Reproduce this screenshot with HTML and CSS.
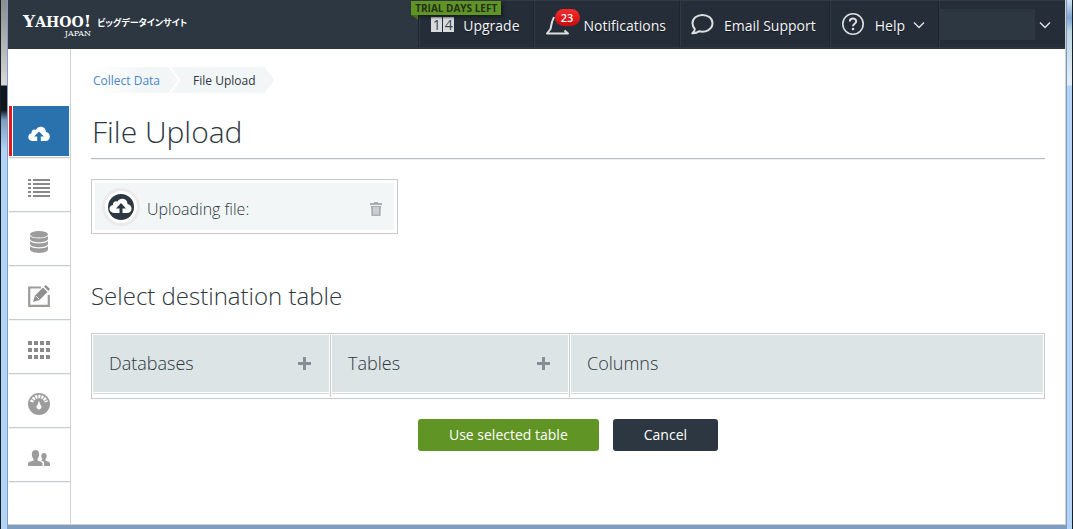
FILE: index.html
```html
<!DOCTYPE html>
<html lang="en">
<head>
  <meta charset="UTF-8" />
  <meta name="viewport" content="width=device-width, initial-scale=1.0"/>
  <title>File Upload</title>
  <link rel="stylesheet" href="styles.css">
</head>
<body>
  <div class="window">
    <header class="topbar">
      <a class="logo" href="#">
        <span class="logo-name"><span class="logo-yahoo"><b>Y</b>AHOO<b>!</b></span><span class="logo-japan">JAPAN</span></span>
        <span class="logo-product" lang="ja">ビッグデータインサイト</span>
      </a>
      <nav class="topnav">
        <a class="nav-item nav-upgrade" href="#">
          <span class="trial">TRIAL DAYS LEFT</span>
          <span class="days"><span>1</span><span>4</span></span>
          Upgrade
        </a>
        <a class="nav-item nav-notifications" href="#">
          <svg class="bell" width="24" height="22" viewBox="0 0 24 22">
            <path d="M8 3 L6 8 L4.500 15 L1 19.500 L22 19.500 L18.500 16.500" fill="none" stroke="#dcdfe0" stroke-width="2" stroke-linejoin="round"/>
          </svg>
          <span class="badge">23</span>
          Notifications
        </a>
        <a class="nav-item nav-email" href="#">
          <svg width="24" height="24" viewBox="0 0 24 24">
            <path d="M12.500 3 C6.800 3 2.500 6.500 2.500 11.300 C2.500 14 3.500 15.600 4.800 17 C4.900 18.800 3.800 20 2.300 21.300 C5.500 21.500 7.600 20.500 9 19.300 C16 21 22.500 17 22.500 11.300 C22.500 6.500 18.200 3 12.500 3 Z" fill="none" stroke="#dcdfe0" stroke-width="2" stroke-linejoin="round"/>
          </svg>
          Email Support
        </a>
        <a class="nav-item nav-help" href="#">
          <svg width="24" height="24" viewBox="0 0 24 24">
            <circle cx="12" cy="12" r="10.200" fill="none" stroke="#dcdfe0" stroke-width="1.600"/>
            <path d="M8.800 9.500 C8.800 5.600 15.200 5.600 15.200 9.300 C15.200 11.800 12 11.600 12 14.300" fill="none" stroke="#dcdfe0" stroke-width="2"/>
            <circle cx="12" cy="17" r="1.300" fill="#dcdfe0"/>
          </svg>
          Help
          <svg class="chevron" width="12" height="8" viewBox="0 0 12 8"><path d="M1 1.500 L6 6.500 L11 1.500" fill="none" stroke="#dcdfe0" stroke-width="1.500"/></svg>
        </a>
        <a class="nav-item nav-account" href="#" aria-label="Account">
          <span class="account-name"></span>
          <svg class="chevron" width="12" height="8" viewBox="0 0 12 8"><path d="M1 1.500 L6 6.500 L11 1.500" fill="none" stroke="#dcdfe0" stroke-width="1.500"/></svg>
        </a>
      </nav>
    </header>

    <div class="layout">
      <nav class="sidebar">
        <a class="side-item active" href="#" aria-label="Collect data">
          <svg width="22" height="16" viewBox="0 0 22 16">
            <path d="M5 15 C-1 15 -1 8 3.500 7.300 C3 4 6.500 2.500 8 4 C10 -1 18 0 17.800 6 C23.500 6.500 23 15 17.500 15 Z" fill="#fff"/>
            <path d="M11 5.500 L16 10.500 H12.800 V15 H9.200 V10.500 H6 Z" fill="#2a72ae"/>
          </svg>
        </a>
        <a class="side-item" href="#" aria-label="Jobs">
          <svg width="22" height="18" viewBox="0 0 22 18" fill="#8a8a8a">
            <path d="M0 0h3v2H0z M5 0h17v2H5z M0 4h3v2H0z M5 4h17v2H5z M0 8h3v2H0z M5 8h17v2H5z M0 12h3v2H0z M5 12h17v2H5z M0 16h3v2H0z M5 16h17v2H5z"/>
          </svg>
        </a>
        <a class="side-item" href="#" aria-label="Databases">
          <svg width="18" height="22" viewBox="0 0 18 22" fill="#9c9c9c">
            <ellipse cx="9" cy="3.300" rx="9" ry="3.300"/>
            <path d="M0 5 C2 8.200 16 8.200 18 5 V8 C17 12.300 1 12.300 0 8 Z"/>
            <path d="M0 10 C2 13.200 16 13.200 18 10 V13 C17 17.300 1 17.300 0 13 Z"/>
            <path d="M0 15 C2 18.200 16 18.200 18 15 V18.500 C17 23 1 23 0 18.500 Z"/>
          </svg>
        </a>
        <a class="side-item" href="#" aria-label="New query">
          <svg width="22" height="22" viewBox="0 0 22 22">
            <path d="M13 2.500 H1.200 V20.800 H20.800 V10" fill="none" stroke="#9c9c9c" stroke-width="2.200"/>
            <path d="M5 17 L7 10.500 L15 2.500 L19.500 7 L11.500 15 Z M16 1.500 L17.800 0 L22 4 L20.400 6 Z" fill="#8f8f8f"/>
            <path d="M8 11 L11 14" stroke="#fff" stroke-width="0.800"/>
          </svg>
        </a>
        <a class="side-item" href="#" aria-label="Applications">
          <svg width="22" height="18" viewBox="0 0 22 18" fill="#8a8a8a">
            <path d="M0 0h4v4H0z M6 0h4v4H6z M12 0h4v4h-4z M18 0h4v4h-4z M0 7h4v4H0z M6 7h4v4H6z M12 7h4v4h-4z M18 7h4v4h-4z M0 14h4v4H0z M6 14h4v4H6z M12 14h4v4h-4z M18 14h4v4h-4z"/>
          </svg>
        </a>
        <a class="side-item" href="#" aria-label="Usage">
          <svg width="22" height="22" viewBox="0 0 22 22">
            <circle cx="11" cy="11" r="11" fill="#9c9c9c"/>
            <path d="M3.700 9 A7.600 7.600 0 0 1 18.300 9" fill="none" stroke="#fff" stroke-width="3.500" stroke-dasharray="2 1"/>
            <path d="M11 7.500 L12.400 12 A2.400 2.400 0 1 1 9.600 12 Z" fill="#fff"/>
          </svg>
        </a>
        <a class="side-item" href="#" aria-label="Users">
          <svg width="22" height="16" viewBox="0 0 22 16" fill="#9c9c9c">
            <path d="M0 16 V13 C1 11.500 4 11.500 5.500 10.500 V9 C3 6 3 0 7.500 0 C12 0 12 6 9.500 9 V10.500 C11 11.500 13.500 11.500 14.500 13 V16 Z"/>
            <path d="M16 16 V12.500 C15.500 11.500 14.500 11 13.200 10.500 C14 10 14.500 9.500 14.500 9 C12.500 6.500 13 3 16 3 C19 3 19.500 6.500 17.500 9 V10.500 C18.500 11.500 21 11.500 22 13 V16 Z"/>
          </svg>
        </a>
      </nav>

      <main class="content">
        <nav class="breadcrumb" aria-label="Breadcrumb">
          <a class="crumb crumb-first" href="#">Collect Data</a>
          <span class="crumb crumb-last">File Upload</span>
        </nav>

        <h1>File Upload</h1>

        <section class="upload">
          <div class="upload-inner">
            <svg class="upload-icon" width="38" height="38" viewBox="0 0 38 38">
              <circle cx="19" cy="19" r="17.500" fill="#fff" stroke="#ebebeb" stroke-width="3"/>
              <circle cx="19" cy="19" r="13" fill="#2d3741"/>
              <path d="M13 25 C6 25 6 17.500 11 17 C10.500 14 13.500 12.500 15.500 13.500 C18 9 25.500 10.500 25.500 16 C31 17 31 25 25 25 Z" fill="#fff"/>
              <path d="M19 15 L24 20.500 H20.500 V25 H17.500 V20.500 H14 Z" fill="#2d3741"/>
            </svg>
            <span class="upload-label">Uploading file:</span>
            <button class="icon-button" type="button" aria-label="Remove file">
              <svg width="12" height="14" viewBox="0 0 12 14">
                <path d="M4 1 V0 H8 V1 H12 V3 H0 V1 Z M1 4 H11 L10.500 14 H1.500 Z" fill="#a9aeb2"/>
                <path d="M4 5 V12.500 M6 5 V12.500 M8 5 V12.500" stroke="#f2f6f7" stroke-width="0.900"/>
              </svg>
            </button>
          </div>
        </section>

        <h2>Select destination table</h2>

        <section class="picker">
          <div class="picker-col">
            <h3>Databases</h3>
            <button class="icon-button" type="button" aria-label="Add database">
              <svg width="13" height="13" viewBox="0 0 13 13"><path d="M5 0h3v5h5v3H8v5H5V8H0V5h5z" fill="#868e96"/></svg>
            </button>
          </div>
          <div class="picker-col">
            <h3>Tables</h3>
            <button class="icon-button" type="button" aria-label="Add table">
              <svg width="13" height="13" viewBox="0 0 13 13"><path d="M5 0h3v5h5v3H8v5H5V8H0V5h5z" fill="#868e96"/></svg>
            </button>
          </div>
          <div class="picker-col">
            <h3>Columns</h3>
          </div>
        </section>

        <div class="actions">
          <button class="button button-primary" type="button">Use selected table</button>
          <button class="button button-dark" type="button">Cancel</button>
        </div>
      </main>
    </div>
  </div>
</body>
</html>
```
FILE: styles.css
```css
* {
  box-sizing: border-box;
}

body {
  margin: 0;
  padding: 0 6px 4px 7px;
  min-height: 100vh;
  display: flex;
  flex-direction: column;
  font-family: "Open Sans", "Noto Sans", sans-serif;
  font-size: 14px;
  color: #2d3741;
  background: linear-gradient(#8c8c8c, #d8d8d8 85px, #10141c 86px, #10141c 110px, #7f9cbd 120px, #b3d3f7 150px) left / 7px 100% no-repeat,
    linear-gradient(#cfe2f5, #7fa5cc 18px, #bdd8e0 32px, #e5eef8 85px, #b3d3f7 86px) right / 6px 100% no-repeat,
    #7e9cbd;
  border-right: 1px solid #16202b;
  border-left: 1px solid #16202b;
}

a {
  color: inherit;
  text-decoration: none;
}

svg {
  display: block;
  flex: none;
}

h1, h2, h3 {
  margin: 0;
  font-weight: 300;
}

.window {
  flex: 1;
  display: flex;
  flex-direction: column;
  background: #fff;
  border-right: 1px solid #d0d0d0;
  border-bottom: 1px solid #d0d0d0;
}

/* top bar */
.topbar {
  display: flex;
  justify-content: space-between;
  height: 49px;
  background: #2d3741;
  color: #f4f5f6;
}

.logo {
  display: flex;
  align-items: flex-start;
  gap: 6px;
  padding: 14px 0 0 15px;
  color: #fff;
}

.logo-name {
  display: flex;
  flex-direction: column;
  align-items: flex-end;
  font-family: "DejaVu Serif", serif;
}

.logo-yahoo {
  font-size: 14px;
  font-weight: bold;
  line-height: 15px;
}

.logo-yahoo b {
  font-size: 17px;
}

.logo-japan {
  margin-top: 1px;
  font-size: 8px;
  line-height: 6px;
}

.logo-product {
  font-family: "Noto Sans CJK JP", sans-serif;
  font-size: 9px;
  font-weight: bold;
  font-feature-settings: "palt";
  line-height: 18px;
  white-space: nowrap;
}

.topnav {
  display: flex;
  background: #252d38;
  border-top: 1px solid #2f3a44;
  border-bottom: 2px solid #2d3741;
}

.nav-item {
  position: relative;
  display: flex;
  align-items: center;
  padding: 2px 13px 0 12px;
  border-left: 1px solid #1d242c;
  box-shadow: inset 1px 0 #303944;
  white-space: nowrap;
  text-shadow: 0 1px 1px #11161c;
}

.nav-item svg {
  margin-right: 10px;
  margin-bottom: 2px;
}

.nav-upgrade .days {
  display: flex;
  gap: 1px;
  margin-right: 9px;
  margin-bottom: 2px;
}

.days span {
  width: 11px;
  background: #d8dbdd;
  color: #3b444d;
  line-height: 15px;
  text-align: center;
  text-shadow: none;
}

.trial {
  position: absolute;
  top: 0;
  left: -8px;
  width: 90px;
  background: #609424;
  color: #24301a;
  font-size: 10px;
  font-weight: bold;
  line-height: 14px;
  text-align: center;
  text-shadow: none;
  box-shadow: 2px 2px 3px #161c22;
}

.trial::after {
  content: "";
  position: absolute;
  top: 14px;
  left: 0;
  border-top: 5px solid #456d17;
  border-left: 7px solid transparent;
}

.nav-notifications .bell {
  margin-right: 14px;
  margin-bottom: 0;
}

.badge {
  position: absolute;
  top: 8px;
  left: 21px;
  width: 25px;
  border-radius: 9px;
  background: linear-gradient(#f82c2c, #c80d10);
  color: #fff;
  font-size: 11px;
  font-weight: 600;
  line-height: 17px;
  text-align: center;
  text-shadow: none;
}

.nav-email {
  padding-left: 10px;
}

.nav-help {
  padding: 2px 13px 0 11px;
}

.nav-item .chevron {
  margin: 0 0 0 8px;
}

.nav-account {
  padding: 2px 14px 0 0;
}

.nav-account .chevron {
  margin-left: 4px;
}

.account-name {
  width: 96px;
  height: 31px;
  margin-bottom: 2px;
  background: #2d3741;
}

/* sidebar */
.layout {
  flex: 1;
  display: flex;
}

.sidebar {
  flex: none;
  width: 63px;
  padding: 55px 0 0 1px;
  border-right: 1px solid #cfd2d3;
}

.side-item {
  display: flex;
  align-items: center;
  justify-content: center;
  height: 54px;
  padding: 7px 2px 0 0;
  border-bottom: 1px solid #c6cdd0;
  box-shadow: 0 1px #eef3f4;
}

.side-item.active {
  background: linear-gradient(90deg, #e01b1f 3px, #fff 3px, #fff 4px, #2a72ae 4px) 0 2px / 60px 50px no-repeat;
}

/* page */
.content {
  flex: 1;
  min-width: 0;
  padding: 18px 20px 30px;
}

.breadcrumb {
  display: flex;
  gap: 2px;
  font-size: 12px;
  line-height: 24px;
}

.crumb {
  background: #f2f6f7;
}

.crumb-first {
  padding: 2px 18px 0 2px;
  color: #4a86c8;
  background: linear-gradient(90deg, #fff, #f2f6f7 60px);
  clip-path: polygon(0 0, calc(100% - 10px) 0, 100% 50%, calc(100% - 10px) 100%, 0 100%);
}

.crumb-last {
  margin-left: -9px;
  padding: 2px 19px 0 22px;
  clip-path: polygon(0 0, calc(100% - 10px) 0, 100% 50%, calc(100% - 10px) 100%, 0 100%, 10px 50%);
}

h1 {
  padding: 18px 0 5px 1px;
  border-bottom: 1px solid #b5c0c2;
  box-shadow: 0 1px #eef2f3;
  font-size: 30px;
  line-height: 42px;
}

.upload {
  width: 307px;
  margin-top: 20px;
  padding: 3px;
  border: 1px solid #c8cacb;
}

.upload-inner {
  display: flex;
  align-items: center;
  height: 47px;
  padding: 0 9px 0 7px;
  background: #f2f6f7;
}

.upload-label {
  flex: 1;
  padding: 5px 0 0 7px;
  font-size: 16px;
  font-weight: 300;
}

.icon-button {
  padding: 3px;
  border: 0;
  background: none;
  cursor: pointer;
}

.upload .icon-button {
  padding-top: 7px;
}

h2 {
  margin: 45px 0 21px;
  font-size: 24px;
  line-height: 33px;
}

.picker {
  display: grid;
  grid-template-columns: calc(25% + 1px) calc(25% + 1px) 1fr;
  padding: 1px 0;
  border: 1px solid #c8cacb;
}

.picker-col {
  display: flex;
  align-items: center;
  justify-content: space-between;
  height: 62px;
  padding: 0 16px 5px 17px;
  border-right: 1px solid #c8cacb;
  background: linear-gradient(#dce4e5 57px, #fff 57px, #fff 58px, #d4d8d9 58px, #d4d8d9 59px, #fff 59px);
  box-shadow: inset 1px 0 #fff, inset -1px 0 #fff;
}

.picker-col:last-child {
  border-right: 0;
}

h3 {
  padding-bottom: 1px;
  font-size: 18px;
  line-height: 24px;
}

.actions {
  display: flex;
  justify-content: center;
  gap: 14px;
  margin-top: 20px;
}

.button {
  height: 32px;
  padding: 0 31px 1px;
  border: 0;
  border-radius: 3px;
  color: #fff;
  font: 14px "Open Sans", "Noto Sans", sans-serif;
  cursor: pointer;
}

.button-primary {
  background: #609424;
}

.button-dark {
  background: #2d3741;
}
```
